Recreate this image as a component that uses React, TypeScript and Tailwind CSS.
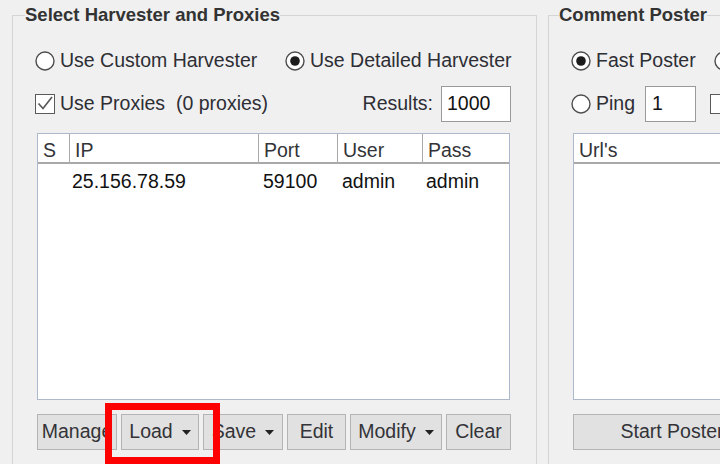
import React from "react";

const Radio = ({ checked }: { checked?: boolean }) => (
  <svg width="20" height="20" viewBox="0 0 20 20" className="shrink-0 block">
    <circle cx="10" cy="10" r="9" fill="#ffffff" stroke="#4d4d4d" strokeWidth="1.4" />
    {checked && <circle cx="10" cy="10" r="4.8" fill="#1c1c1c" />}
  </svg>
);

const Check = ({ checked }: { checked?: boolean }) => (
  <svg width="20" height="20" viewBox="0 0 20 20" className="shrink-0 block">
    <rect x="0.5" y="0.5" width="19" height="19" fill="#ffffff" stroke="#5a5a5a" />
    {checked && (
      <path d="M3.5 9.5 L8 14.5 L17 3" fill="none" stroke="#5a5a5a" strokeWidth="1.7" />
    )}
  </svg>
);

const Arrow = () => (
  <svg width="9" height="5" viewBox="0 0 9 5" className="shrink-0 block">
    <path d="M0 0H9L4.5 5Z" fill="#222222" />
  </svg>
);

const Btn = ({
  className,
  children,
  arrow,
}: {
  className: string;
  children: React.ReactNode;
  arrow?: boolean;
}) => (
  <div
    className={
      "h-[36px] shrink-0 flex items-center justify-center gap-[9px] bg-[#e1e1e1] border border-[#b4b4b4] text-[#333338] whitespace-nowrap overflow-hidden " +
      className
    }
  >
    <span>{children}</span>
    {arrow && <Arrow />}
  </div>
);

export default function App() {
  return (
    <div className="relative w-[720px] h-[464px] overflow-hidden bg-[#f0f0f0] font-['Liberation_Sans',Arial,sans-serif] text-[19.5px] text-[#2e2e35]">
      <div className="flex items-start pl-[12px] pt-[4px]">
        {/* Left group */}
        <fieldset className="w-[525px] h-[520px] shrink-0 border border-[#d5d5d5] p-0 m-0">
          <legend className="ml-[12px] h-[22px] leading-[22px] font-bold text-[18.5px] text-[#333333] px-0">
            Select Harvester and Proxies
          </legend>

          <div className="mt-[23px] h-[24px] flex items-center pl-[22px]">
            <div className="w-[250px] flex items-center gap-[5px]">
              <Radio />
              <span>Use Custom Harvester</span>
            </div>
            <div className="flex items-center gap-[5px]">
              <Radio checked />
              <span>Use Detailed Harvester</span>
            </div>
          </div>

          <div className="mt-[13px] h-[36px] flex items-center pl-[22px] pr-[25px]">
            <div className="flex items-center gap-[5px]">
              <Check checked />
              <span className="whitespace-pre">Use Proxies  (0 proxies)</span>
            </div>
            <span className="ml-auto">Results:</span>
            <div className="ml-[8px] w-[70px] h-[36px] bg-white border border-[#9a9a9a] flex items-center pl-[5px] text-[#111]">
              1000
            </div>
          </div>

          <div className="mt-[11px] ml-[24px] w-[473px] h-[267px] border border-[#adb9ca] bg-white">
            <div className="flex h-[30px] border-b-2 border-[#a9a9a9] text-[#333338]">
              <div className="w-[32px] border-r border-[#a9a9a9] flex items-center pl-[5px] pt-[5px]">S</div>
              <div className="w-[189px] border-r border-[#a9a9a9] flex items-center pl-[5px] pt-[5px]">IP</div>
              <div className="w-[79px] border-r border-[#a9a9a9] flex items-center pl-[5px] pt-[5px]">Port</div>
              <div className="w-[85px] border-r border-[#a9a9a9] flex items-center pl-[5px] pt-[5px]">User</div>
              <div className="flex-1 flex items-center pl-[5px] pt-[5px]">Pass</div>
            </div>
            <div className="flex h-[35px] items-center text-[#111111]">
              <div className="w-[32px]" />
              <div className="w-[189px] pl-[2px]">25.156.78.59</div>
              <div className="w-[79px] pl-[4px]">59100</div>
              <div className="w-[85px] pl-[4px]">admin</div>
              <div className="flex-1 pl-[3px]">admin</div>
            </div>
          </div>

          <div className="mt-[14px] ml-[24px] flex gap-[4px]">
            <Btn className="w-[80px]">Manage</Btn>
            <Btn className="w-[78px]" arrow>Load</Btn>
            <Btn className="w-[80px]" arrow>Save</Btn>
            <Btn className="w-[59px]">Edit</Btn>
            <Btn className="w-[92px]" arrow>Modify</Btn>
            <Btn className="w-[65px]">Clear</Btn>
          </div>
        </fieldset>

        {/* Right group */}
        <fieldset className="ml-[11px] w-[300px] h-[520px] shrink-0 border border-[#d5d5d5] p-0 m-0">
          <legend className="ml-[10px] h-[22px] leading-[22px] font-bold text-[18.5px] text-[#333333] px-0">
            Comment Poster
          </legend>

          <div className="mt-[23px] h-[24px] flex items-center pl-[22px]">
            <div className="w-[143px] flex items-center gap-[5px] shrink-0">
              <Radio checked />
              <span>Fast Poster</span>
            </div>
            <Radio />
          </div>

          <div className="mt-[13px] h-[36px] flex items-center pl-[22px]">
            <div className="flex items-center gap-[5px] shrink-0">
              <Radio />
              <span>Ping</span>
            </div>
            <div className="ml-[10px] w-[51px] h-[36px] shrink-0 bg-white border border-[#9a9a9a] flex items-center pl-[6px] text-[#111]">
              1
            </div>
            <div className="ml-[14px] shrink-0">
              <Check />
            </div>
          </div>

          <div className="mt-[11px] ml-[24px] w-[250px] h-[267px] border border-[#adb9ca] bg-white">
            <div className="flex h-[30px] border-b-2 border-[#a9a9a9] text-[#333338]">
              <div className="flex-1 flex items-center pl-[5px] pt-[5px]">Url's</div>
            </div>
          </div>

          <div className="mt-[14px] ml-[24px] flex">
            <Btn className="w-[198px]">Start Poster</Btn>
          </div>
        </fieldset>
      </div>

      <div className="absolute left-[105px] top-[403px] w-[115px] h-[61px] border-[7px] border-[#ff0000]" />
    </div>
  );
}
